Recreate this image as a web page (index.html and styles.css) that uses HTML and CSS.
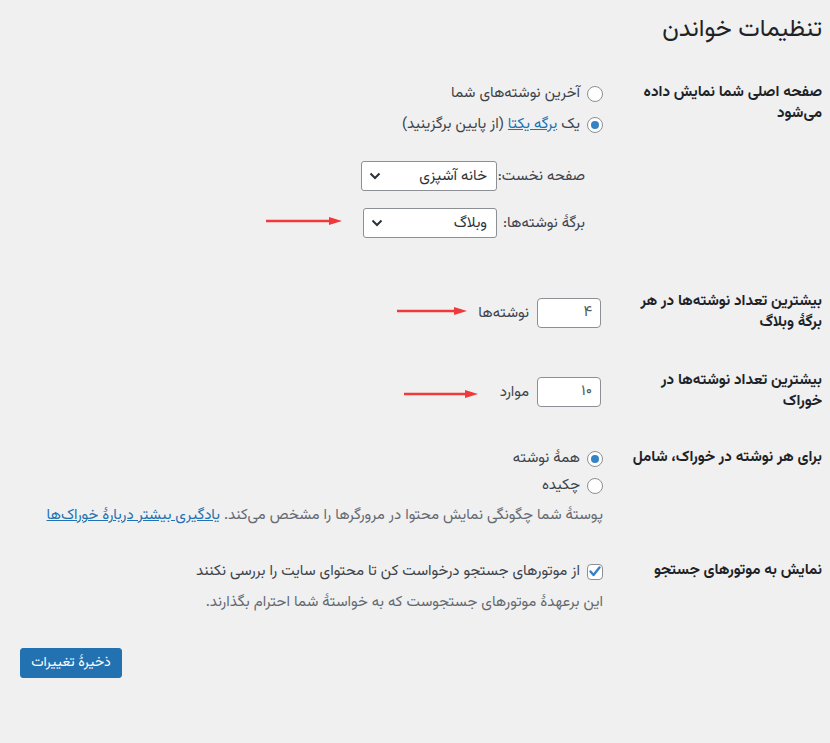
FILE: index.html
```html
<!DOCTYPE html>
<html dir="rtl" lang="fa">
<head>
<meta charset="utf-8">
<title>تنظیمات خواندن</title>
<link rel="stylesheet" href="styles.css">
</head>
<body>
<div class="wrap">
  <h1 class="title">تنظیمات خواندن</h1>

  <div class="row row-front">
    <div class="th">صفحه اصلی شما نمایش داده<br>می‌شود</div>
    <div class="td">
      <label class="opt"><span class="radio"></span><span>آخرین نوشته‌های شما</span></label>
      <label class="opt opt-gap"><span class="radio checked"></span><span>یک <a href="#" class="link">برگه یکتا</a> (از پایین برگزینید)</span></label>
      <ul class="pages">
        <li class="page-row">
          <span class="page-label">صفحه نخست:</span>
          <div class="select"><span class="select-text">خانه آشپزی</span>
            <svg class="chev" width="12" height="8" viewBox="0 0 12 8"><path d="M1.5 1.5 L6 6 L10.5 1.5" fill="none" stroke="#2c3338" stroke-width="2"/></svg>
          </div>
        </li>
        <li class="page-row page-row2">
          <span class="page-label">برگهٔ نوشته‌ها:</span>
          <div class="select select2"><span class="select-text">وبلاگ</span>
            <svg class="chev" width="12" height="8" viewBox="0 0 12 8"><path d="M1.5 1.5 L6 6 L10.5 1.5" fill="none" stroke="#2c3338" stroke-width="2"/></svg>
          </div>
        </li>
      </ul>
    </div>
  </div>

  <div class="row row-posts">
    <div class="th">بیشترین تعداد نوشته‌ها در هر<br>برگهٔ وبلاگ</div>
    <div class="td">
      <div class="num-row"><span class="num">۴</span><span class="unit">نوشته‌ها</span></div>
    </div>
  </div>

  <div class="row row-feed">
    <div class="th">بیشترین تعداد نوشته‌ها در<br>خوراک</div>
    <div class="td">
      <div class="num-row"><span class="num">۱۰</span><span class="unit">موارد</span></div>
    </div>
  </div>

  <div class="row row-include">
    <div class="th">برای هر نوشته در خوراک، شامل</div>
    <div class="td">
      <label class="opt"><span class="radio checked"></span><span>همهٔ نوشته</span></label>
      <label class="opt opt-gap2"><span class="radio"></span><span>چکیده</span></label>
      <p class="desc desc1">پوستهٔ شما چگونگی نمایش محتوا در مرورگرها را مشخص می‌کند. <a href="#" class="link">یادگیری بیشتر دربارهٔ خوراک‌ها</a></p>
    </div>
  </div>

  <div class="row row-search">
    <div class="th">نمایش به موتورهای جستجو</div>
    <div class="td">
      <label class="opt"><span class="check">
        <svg width="12" height="11" viewBox="0 0 12 11"><path d="M1.5 5.5 L4.5 9 L10.5 1.5" fill="none" stroke="#3582c4" stroke-width="2.4" stroke-linecap="round" stroke-linejoin="round"/></svg>
      </span><span>از موتورهای جستجو درخواست کن تا محتوای سایت را بررسی نکنند</span></label>
      <p class="desc desc2">این برعهدهٔ موتورهای جستجوست که به خواستهٔ شما احترام بگذارند.</p>
    </div>
  </div>

  <div class="submit-row"><button class="button">ذخیرهٔ تغییرات</button></div>
</div>

<svg class="arrow arrow1" width="76" height="10" viewBox="0 0 76 10"><line x1="0" y1="5" x2="66" y2="5" stroke="#f0393a" stroke-width="2.4"/><polygon points="63,1 76,5 63,9" fill="#f0393a"/></svg>
<svg class="arrow arrow2" width="70" height="10" viewBox="0 0 70 10"><line x1="0" y1="5" x2="60" y2="5" stroke="#f0393a" stroke-width="2.4"/><polygon points="57,1 70,5 57,9" fill="#f0393a"/></svg>
<svg class="arrow arrow3" width="74" height="10" viewBox="0 0 74 10"><line x1="0" y1="5" x2="64" y2="5" stroke="#f0393a" stroke-width="2.4"/><polygon points="61,1 74,5 61,9" fill="#f0393a"/></svg>
</body>
</html>
```

FILE: styles.css
```css
html, body {
  margin: 0;
  padding: 0;
  background: #f0f0f1;
}
body {
  position: relative;
  font-family: "Vazirmatn", "Noto Sans Arabic", "DejaVu Sans", sans-serif;
  font-size: 15px;
  line-height: 21px;
  color: #3c434a;
  min-height: 743px;
}
.wrap {
  padding: 0 8px 0 20px;
}
.title {
  margin: 0;
  padding-top: 15px;
  font-size: 24.5px;
  line-height: 30px;
  font-weight: 400;
  color: #1d2327;
}
.row {
  display: flex;
}
.th {
  width: 200px;
  flex: none;
  font-weight: 700;
  font-size: 15.2px;
  color: #1d2327;
  line-height: 21px;
}
.td {
  flex: 1;
  padding-right: 19px;
}
.row-front { margin-top: 37px; }
.row-posts { margin-top: 53px; }
.row-feed { margin-top: 37px; }
.row-include { margin-top: 35px; }
.row-search { margin-top: 34px; }

.opt {
  display: flex;
  align-items: center;
  gap: 7px;
  height: 21px;
  margin-top: 1px;
  white-space: nowrap;
}
.opt-gap { margin-top: 10px; }
.opt-gap2 { margin-top: 6px; }

.radio {
  flex: none;
  width: 16px;
  height: 16px;
  box-sizing: border-box;
  border: 1px solid #8c8f94;
  border-radius: 50%;
  background: #fff;
  display: flex;
  align-items: center;
  justify-content: center;
}
.radio.checked::after {
  content: "";
  width: 8px;
  height: 8px;
  border-radius: 50%;
  background: #3582c4;
}
.check {
  flex: none;
  width: 16px;
  height: 16px;
  box-sizing: border-box;
  border: 1px solid #8c8f94;
  border-radius: 4px;
  background: #fff;
  display: flex;
  align-items: center;
  justify-content: center;
}
.link {
  color: #2271b1;
  text-decoration: underline;
}

.pages {
  list-style: none;
  margin: 26px 0 0;
  padding: 0 18px 0 0;
}
.page-row {
  display: flex;
  align-items: center;
  gap: 8px;
  height: 30px;
}
.page-row2 { margin-top: 17px; }
.page-label {
  white-space: nowrap;
  width: 80px;
  flex: none;
}
.select {
  width: 136px;
  height: 30px;
  box-sizing: border-box;
  border: 1px solid #8c8f94;
  border-radius: 3px;
  background: #fff;
  display: flex;
  align-items: center;
  justify-content: space-between;
  padding: 0 9px 0 7px;
  color: #2c3338;
}
.select2 { width: 134px; }

.num-row {
  display: flex;
  align-items: center;
  gap: 8px;
  margin-top: 7px;
}
.num {
  width: 64px;
  height: 30px;
  box-sizing: border-box;
  border: 1px solid #8c8f94;
  border-radius: 4px;
  background: #fff;
  padding: 0 8px;
  line-height: 28px;
  color: #50575e;
  margin-right: 2px;
}
.unit { white-space: nowrap; }

.desc {
  margin: 0;
  color: #646970;
  white-space: nowrap;
}
.desc1 { margin-top: 9px; }
.desc2 { margin-top: 10px; }

.submit-row {
  margin-top: 35px;
  display: flex;
  justify-content: flex-end;
}
.button {
  width: 102px;
  height: 30px;
  border: 1px solid #2271b1;
  border-radius: 3px;
  background: #2271b1;
  color: #fff;
  font-family: inherit;
  font-size: 14px;
  padding: 0;
}

.arrow {
  position: absolute;
}
.arrow1 { left: 266px; top: 216px; }
.arrow2 { left: 397px; top: 306px; }
.arrow3 { left: 404px; top: 389px; }
```
